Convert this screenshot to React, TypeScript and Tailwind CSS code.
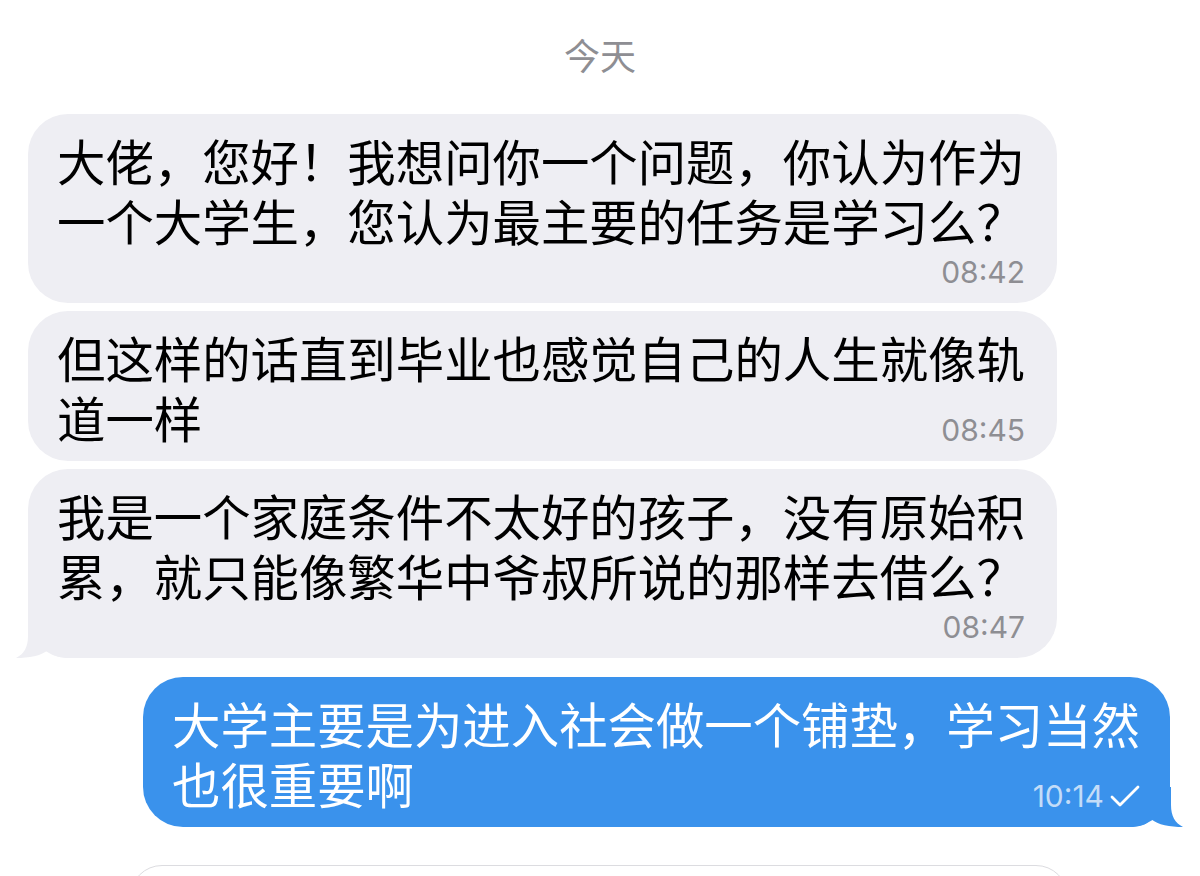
import React from 'react';

type Msg = {
  lines: string[];
  time: string;
  mine?: boolean;
  inlineTime?: boolean;
  tail?: boolean;
};

const messages: Msg[] = [
  {
    lines: ['大佬，您好！我想问你一个问题，你认为作为', '一个大学生，您认为最主要的任务是学习么？'],
    time: '08:42',
  },
  {
    lines: ['但这样的话直到毕业也感觉自己的人生就像轨', '道一样'],
    time: '08:45',
    inlineTime: true,
  },
  {
    lines: ['我是一个家庭条件不太好的孩子，没有原始积', '累，就只能像繁华中爷叔所说的那样去借么？'],
    time: '08:47',
    tail: true,
  },
  {
    lines: ['大学主要是为进入社会做一个铺垫，学习当然', '也很重要啊'],
    time: '10:14',
    mine: true,
    inlineTime: true,
    tail: true,
  },
];

const cjk = { fontFamily: '"Noto Sans CJK SC", "Noto Sans", sans-serif' };
const digits = { fontFamily: 'Inter, "Noto Sans", sans-serif' };

// Bubble tail, drawn for the bottom-left corner; mirrored for outgoing messages
function Tail({ color, mine }: { color: string; mine?: boolean }) {
  return (
    <svg
      width="54"
      height="40"
      viewBox="0 0 54 40"
      className={`absolute bottom-0 ${mine ? 'right-[-13px] -scale-x-100' : 'left-[-12px]'}`}
    >
      <path d="M12 0 L54 0 L54 40 C43 40 37 38 32 32 C25 38 13 40 0 40 C8 36 12 29 12 18 Z" fill={color} />
    </svg>
  );
}

function Check() {
  return (
    <svg width="30" height="24" viewBox="0 0 30 24" fill="none" stroke="#ffffff" strokeWidth={2.8} strokeLinecap="round" strokeLinejoin="round">
      <path d="M2 13 L10 21 L28 3" />
    </svg>
  );
}

function Bubble({ m }: { m: Msg }) {
  const bg = m.mine ? '#3a92ec' : '#eeeef3';
  return (
    <div
      className={`relative rounded-[40px] pt-[16px] pb-[14px] pl-[29px] ${
        m.mine ? 'ml-[143px] w-[1027px] bg-[#3a92ec] pr-[30px] text-white' : 'ml-[28px] w-[1029px] bg-[#eeeef3] pr-[32px] text-black'
      }`}
    >
      {m.tail && <Tail color={bg} mine={m.mine} />}
      <div className="relative text-[48.4px] leading-[60px] whitespace-nowrap" style={cjk}>
        {m.lines.map((l, i) => (
          <div key={i}>{l}</div>
        ))}
      </div>
      <div
        className={`relative flex h-[34px] items-center justify-end gap-[6px] text-[30px] leading-[34px] ${
          m.inlineTime ? '-mt-[34px]' : 'mt-[5px]'
        } ${m.mine ? 'text-[#c3dcf8]' : 'text-[#8e8e93]'}`}
        style={digits}
      >
        <span>{m.time}</span>
        {m.mine && <Check />}
      </div>
    </div>
  );
}

export default function App() {
  return (
    <div className="relative h-[876px] w-[1200px] overflow-hidden bg-white">
      <div className="flex h-[114px] items-center justify-center pb-[6px] text-[36px] text-[#8e8e93]" style={cjk}>
        今天
      </div>
      <div className="flex flex-col gap-[8px]">
        {messages.slice(0, 3).map((m, i) => (
          <Bubble key={i} m={m} />
        ))}
      </div>
      <div className="mt-[19px]">
        <Bubble m={messages[3]} />
      </div>
      <div className="ml-[130px] mt-[38px] h-[64px] w-[938px] rounded-[32px] border border-[#dcdce0]" />
    </div>
  );
}
